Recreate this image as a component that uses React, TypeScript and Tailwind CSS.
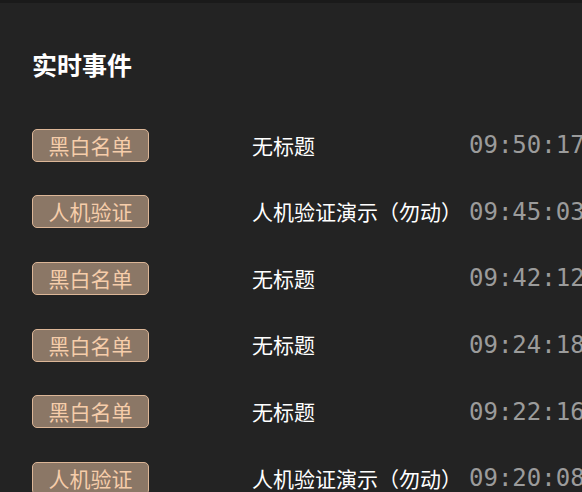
const events = [
  { tag: "黑白名单", title: "无标题", time: "09:50:17" },
  { tag: "人机验证", title: "人机验证演示（勿动）", time: "09:45:03" },
  { tag: "黑白名单", title: "无标题", time: "09:42:12" },
  { tag: "黑白名单", title: "无标题", time: "09:24:18" },
  { tag: "黑白名单", title: "无标题", time: "09:22:16" },
  { tag: "人机验证", title: "人机验证演示（勿动）", time: "09:20:08" },
];

export default function App() {
  return (
    <div className="h-[492px] w-full overflow-hidden border-t-[3px] border-[#1a1a1a] bg-[#232323] font-['Noto_Sans_CJK_SC','Noto_Sans',sans-serif]">
      <div className="pl-8 pt-[44px]">
        <h2 className="text-[25px] font-bold leading-[34px] text-white">实时事件</h2>
        <div className="mt-[31px] flex flex-col">
          {events.map((e, i) => (
            <div key={i} className="flex h-[66.6px] items-center whitespace-nowrap">
              <div className="w-[220px] shrink-0">
                <span className="inline-flex h-[33px] w-[117px] items-center justify-center rounded-[5px] border border-[#dcb697] bg-[#8b7766] text-[21px] leading-none text-[#f6cdaa]">
                  {e.tag}
                </span>
              </div>
              <div className="w-[217px] shrink-0 text-[21px] text-white">{e.title}</div>
              <div className="shrink-0 font-['DejaVu_Sans_Mono',monospace] text-[24px] text-[#9b9b9b]">
                {e.time}
              </div>
            </div>
          ))}
        </div>
      </div>
    </div>
  );
}
